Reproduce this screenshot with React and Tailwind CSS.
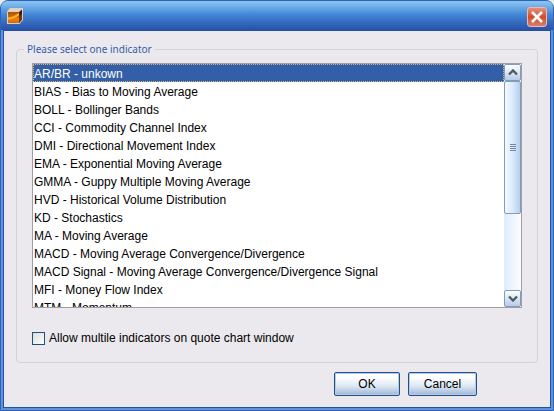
import React, { useState } from 'react';

const indicators = [
  'AR/BR - unkown',
  'BIAS - Bias to Moving Average',
  'BOLL - Bollinger Bands',
  'CCI - Commodity Channel Index',
  'DMI - Directional Movement Index',
  'EMA - Exponential Moving Average',
  'GMMA - Guppy Multiple Moving Average',
  'HVD - Historical Volume Distribution',
  'KD - Stochastics',
  'MA - Moving Average',
  'MACD - Moving Average Convergence/Divergence',
  'MACD Signal - Moving Average Convergence/Divergence Signal',
  'MFI - Money Flow Index',
  'MTM - Momentum',
];

const BoxIcon = () => (
  <svg width="16" height="16" viewBox="0 0 16 16" aria-hidden="true">
    <defs>
      <linearGradient id="front" x1="0" y1="0" x2="0" y2="1">
        <stop offset="0" stopColor="#a85408" />
        <stop offset="0.4" stopColor="#c86a08" />
        <stop offset="0.6" stopColor="#e88410" />
        <stop offset="1" stopColor="#d86c08" />
      </linearGradient>
    </defs>
    <path d="M0 3.5 3 0H16V12L12.5 16H0z" fill="#e0cdbc" />
    <path d="M1 3.5 3.5 1H15L12.5 3.5z" fill="#e6cfcb" />
    <path d="M1 4H12V15H1z" fill="url(#front)" />
    <path d="M1 9.5C5 9.5 8 7.5 12 5V7.5C8 9.5 5 11.5 1 11.5z" fill="#ffb428" />
    <path d="M12 4 15 1.5V11.5L12 15z" fill="#4a1c10" />
    <path d="M12 9 15 6V11.5L12 15z" fill="#7c3408" />
  </svg>
);

const TitleBar = () => (
  <header className="flex h-[29px] items-center justify-between rounded-t-md bg-linear-to-b from-[#86c2f0] from-5% via-[#4488d8] via-45% to-[#2850a8] px-1.5">
    <BoxIcon />
    <button
      type="button"
      aria-label="Close"
      className="mt-0.5 flex size-5 items-center justify-center rounded-[3px] border border-[#f0b8b0] bg-linear-to-b from-[#e09080] via-[#d84820] to-[#d08070]"
    >
      <svg width="12" height="12" viewBox="0 0 12 12" aria-hidden="true">
        <path d="M1 1 11 11M11 1 1 11" stroke="#fff" strokeWidth="2.6" />
      </svg>
    </button>
  </header>
);

const ScrollButton = ({ label, path }) => (
  <button
    type="button"
    aria-label={label}
    className="flex h-[17px] shrink-0 items-center justify-center rounded-[2px] border border-[#7f9dbd] bg-linear-to-b from-white to-[#b8cce8]"
  >
    <svg width="10" height="7" viewBox="0 0 10 7" aria-hidden="true">
      <path d={path} fill="none" stroke="#4d5a68" strokeWidth="2.4" />
    </svg>
  </button>
);

const ScrollBar = () => (
  <div className="flex w-[17px] shrink-0 flex-col bg-linear-to-r from-[#dcecff] to-[#fbfdff]">
    <ScrollButton label="Scroll up" path="M1 5.5 5 1.5 9 5.5" />
    <div className="flex h-[133px] flex-col items-center justify-center gap-px rounded-[2px] border border-[#7f9dbd] bg-linear-to-r from-[#f4f9ff] via-[#dceafa] to-[#b4cef0]">
      {[0, 1, 2, 3].map((n) => (
        <span key={n} className="h-px w-1.5 bg-[#7088a8]" />
      ))}
    </div>
    <div className="flex-1" />
    <ScrollButton label="Scroll down" path="M1 1.5 5 5.5 9 1.5" />
  </div>
);

const DialogButton = ({ children, className }) => (
  <button
    type="button"
    className={`h-6 rounded-[2px] border border-[#205088] bg-linear-to-b from-white from-20% via-[#dce8f4] via-60% to-[#a0b4d4] text-center shadow-[inset_0_0_0_1px_#b4cce8] ${className}`}
  >
    {children}
  </button>
);

export default function App() {
  const [selected, setSelected] = useState(0);

  return (
    <div className="flex min-h-screen flex-col bg-[#ebe9ed]">
      <div
        role="dialog"
        aria-label="Select indicator"
        className="flex flex-1 flex-col rounded-t-lg border border-[#3060b8] bg-[#2850a8] font-['Liberation_Sans',Arial,sans-serif] text-[12px] text-black"
      >
        <TitleBar />
        <main className="flex-1 border-x-2 border-b-2 border-[#5b93dc] bg-[#ebe9ed] px-[13px] pb-2 pt-3 shadow-[inset_0_0_0_1px_#2850a0]">
          <fieldset className="min-w-0 rounded border border-[#d4d2d6] px-[15px] pb-[15px]">
            <legend className="-ml-2 px-[3px] font-['Noto_Sans',sans-serif] text-[10px] leading-[14px] text-[#335ea8]">
              Please select one indicator
            </legend>
            <div className="mt-[7px] flex h-[245px] border border-[#a09ea4] bg-white">
              <ul role="listbox" aria-label="Indicators" className="min-w-0 flex-1 overflow-hidden">
                {indicators.map((name, i) => (
                  <li
                    key={name}
                    role="option"
                    aria-selected={i === selected}
                    onClick={() => setSelected(i)}
                    className={`h-[18px] truncate border border-dotted leading-[18px] ${
                      i === selected
                        ? 'border-[#d8b878] bg-[#335ea8] text-white'
                        : 'border-transparent'
                    }`}
                  >
                    {name}
                  </li>
                ))}
              </ul>
              <ScrollBar />
            </div>
            <label className="mt-[21px] flex w-fit items-center gap-1">
              <input
                type="checkbox"
                className="size-[13px] appearance-none border border-[#1c5180] bg-linear-to-br from-[#dcdcd7] to-white checked:bg-[#335ea8]"
              />
              Allow multile indicators on quote chart window
            </label>
          </fieldset>
          <div className="mt-[9px] flex justify-end gap-2 pr-[61px]">
            <DialogButton className="w-[66px]">OK</DialogButton>
            <DialogButton className="w-[69px]">Cancel</DialogButton>
          </div>
        </main>
      </div>
    </div>
  );
}
